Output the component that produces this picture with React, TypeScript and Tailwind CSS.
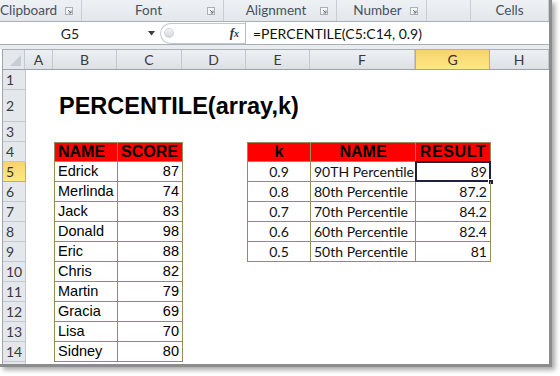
import React from 'react';

const COLS = [
  { key: 'A', w: 'w-[28px]' },
  { key: 'B', w: 'w-[64px]' },
  { key: 'C', w: 'w-[65px]' },
  { key: 'D', w: 'w-[64px]' },
  { key: 'E', w: 'w-[64px]' },
  { key: 'F', w: 'w-[105px]' },
  { key: 'G', w: 'w-[75px]' },
  { key: 'H', w: 'w-[59px]' },
];

const SCORES = [
  ['Edrick', '87'],
  ['Merlinda', '74'],
  ['Jack', '83'],
  ['Donald', '98'],
  ['Eric', '88'],
  ['Chris', '82'],
  ['Martin', '79'],
  ['Gracia', '69'],
  ['Lisa', '70'],
  ['Sidney', '80'],
];

const RESULTS = [
  ['0.9', '90TH Percentile', '89'],
  ['0.8', '80th Percentile', '87.2'],
  ['0.7', '70th Percentile', '84.2'],
  ['0.6', '60th Percentile', '82.4'],
  ['0.5', '50th Percentile', '81'],
];

const ROWS = [
  { n: 1, h: 'h-[20px]' },
  { n: 2, h: 'h-[32px]' },
  { n: 3, h: 'h-[20px]' },
  { n: 4, h: 'h-[20px]' },
  ...[5, 6, 7, 8, 9, 10, 11, 12, 13, 14].map((n) => ({ n, h: 'h-[20px]' })),
  { n: 15, h: 'h-[20px]' },
];

const arial = "font-['Liberation_Sans',Arial,sans-serif]";
const calibri = "font-['Lato','Open_Sans',sans-serif]";

function Launcher() {
  return (
    <svg width="8" height="8" viewBox="0 0 8 8" className="shrink-0">
      <rect x="0.5" y="0.5" width="7" height="7" fill="#f4f6f8" stroke="#a9b0b8" />
      <path d="M3 3 L6 6 M6 3.5 V6 H3.5" stroke="#6c7580" strokeWidth="1" fill="none" />
    </svg>
  );
}

function Ribbon() {
  const groups = [
    { label: 'Clipboard', w: 'w-[82px]', launcher: true, left: true },
    { label: 'Font', w: 'w-[142px]', launcher: true },
    { label: 'Alignment', w: 'w-[113px]', launcher: true },
    { label: 'Number', w: 'w-[90px]', launcher: true },
    { label: '', w: 'w-[44px]' },
    { label: 'Cells', w: 'flex-1' },
  ];
  return (
    <div className="h-[22px] flex bg-gradient-to-b from-[#eef1f4] to-[#e3e7ec] border-b border-[#aab0b8]">
      {groups.map((g, i) => (
        <div
          key={i}
          className={`${g.w} h-full flex items-center border-r border-[#c9ced5] ${g.left ? 'pl-0' : 'pl-2'} pr-[8px] text-[13.5px] text-[#46515f] ${calibri}`}
        >
          <span className={`flex-1 ${g.left ? 'text-left' : 'text-center'} leading-none`}>{g.label}</span>
          {g.launcher && <Launcher />}
        </div>
      ))}
    </div>
  );
}

function FormulaBar() {
  return (
    <div className="h-[23px] flex items-center bg-white border-b border-[#aab0b8]">
      <div className="w-[160px] h-full flex items-center">
        <span className={`w-[140px] text-center text-[14px] text-[#1e1e1e] ${calibri}`}>G5</span>
        <svg width="8" height="5" viewBox="0 0 8 5" className="ml-[8px]">
          <path d="M0 0 H7 L3.5 4.5 Z" fill="#3b3b3b" />
        </svg>
      </div>
      <div className="w-[85px] h-[21px] flex items-center rounded-l-[11px] border border-r-0 border-[#c3c8cf] bg-white">
        <span className="ml-[3px] w-[10px] h-[10px] rounded-full bg-gradient-to-b from-[#f4f5f6] to-[#d2d6db] border border-[#d0d4d9]" />
        <span className="ml-auto mr-[6px] font-['Liberation_Serif',serif] italic font-bold text-[13px] text-[#333]">
          f<span className="text-[10px]">x</span>
        </span>
      </div>
      <div className="h-full border-l border-[#b7bcc3]" />
      <span className={`ml-[7px] text-[14px] text-[#111] ${calibri}`}>=PERCENTILE(C5:C14, 0.9)</span>
    </div>
  );
}

function ColumnHeaders() {
  return (
    <div className="h-[21px] flex border-t border-[#aab0b8] border-b border-b-[#9da3ab]">
      <div className="w-[23px] h-full bg-[#e4e8ed] border-r border-[#c3c8cf] flex items-end justify-end p-[3px]">
        <svg width="11" height="11" viewBox="0 0 11 11">
          <path d="M11 0 V11 H0 Z" fill="#c6ccd4" />
        </svg>
      </div>
      {COLS.map((c) => (
        <div
          key={c.key}
          className={`${c.w} shrink-0 h-full flex items-center justify-center text-[14px] ${calibri} ${
            c.key === 'G'
              ? 'bg-gradient-to-b from-[#f8d26f] to-[#fde983] border-r border-[#e0a83a] border-l border-l-[#e0a83a] text-[#333]'
              : 'bg-gradient-to-b from-[#edf0f3] to-[#dde1e6] border-r border-[#c3c8cf] text-[#3a3a3a]'
          }`}
        >
          {c.key}
        </div>
      ))}
    </div>
  );
}

const tb = 'border-[#978c5c]';

function Cell({ col, row }: { col: string; row: number }) {
  // Table 1: B/C rows 4-14
  if ((col === 'B' || col === 'C') && row >= 4 && row <= 14) {
    const edge = `border-r border-b ${tb} ${col === 'B' ? 'border-l' : ''} ${row === 4 ? 'border-t' : ''}`;
    if (row === 4) {
      return (
        <div className={`h-full bg-[#ff0000] ${edge} flex items-center px-[3px] text-[16px] font-bold text-black ${arial}`}>
          {col === 'B' ? 'NAME' : 'SCORE'}
        </div>
      );
    }
    const [name, score] = SCORES[row - 5];
    return (
      <div
        className={`h-full ${edge} flex items-center px-[3px] text-[14.5px] text-black ${arial} ${
          col === 'C' ? 'justify-end' : ''
        }`}
      >
        {col === 'B' ? name : score}
      </div>
    );
  }
  // Table 2: E/F/G rows 4-9
  if ((col === 'E' || col === 'F' || col === 'G') && row >= 4 && row <= 9) {
    const edge = `border-r border-b ${tb} ${col === 'E' ? 'border-l' : ''} ${row === 4 ? 'border-t' : ''}`;
    if (row === 4) {
      const label = col === 'E' ? 'k' : col === 'F' ? 'NAME' : 'RESULT';
      return (
        <div
          className={`h-full bg-[#ff0000] ${edge} flex items-center justify-center text-[16px] font-bold text-black ${arial} ${
            col === 'G' ? 'tracking-[0.6px]' : ''
          }`}
        >
          {label}
        </div>
      );
    }
    const [k, name, res] = RESULTS[row - 5];
    const text = col === 'E' ? k : col === 'F' ? name : res;
    const align = col === 'E' ? 'justify-center' : col === 'G' ? 'justify-end' : '';
    return (
      <div
        className={`relative h-full ${edge} flex items-center px-[3px] whitespace-nowrap text-[14px] text-[#111] ${calibri} ${align}`}
      >
        {text}
        {col === 'G' && row === 5 && (
          <>
            <div className="absolute -left-px -top-px -right-px -bottom-px border-2 border-[#1f2040]" />
            <div className="absolute -right-[4px] -bottom-[4px] w-[6px] h-[6px] bg-[#1f2040] border border-white" />
          </>
        )}
      </div>
    );
  }
  if (col === 'B' && row === 2) {
    return (
      <div className={`h-full flex items-center pl-[5px] pt-[2px] whitespace-nowrap text-[23.5px] font-bold text-black ${arial}`}>
        PERCENTILE(array,k)
      </div>
    );
  }
  return <div className="h-full" />;
}

function Grid() {
  return (
    <div className="flex-1 overflow-hidden">
      {ROWS.map((r) => (
        <div key={r.n} className={`${r.h} flex`}>
          <div
            className={`w-[23px] shrink-0 h-full flex items-center pl-[3px] text-[14px] ${calibri} border-b border-r ${
              r.n === 5
                ? 'bg-gradient-to-b from-[#f8d26f] to-[#fde983] border-[#e0a83a] text-[#333]'
                : 'bg-[#e4e8ed] border-[#c3c8cf] text-[#3a3a3a]'
            }`}
          >
            {r.n <= 14 ? r.n : ''}
          </div>
          {COLS.map((c) => (
            <div key={c.key} className={`${c.w} shrink-0 h-full overflow-visible`}>
              <Cell col={c.key} row={r.n} />
            </div>
          ))}
        </div>
      ))}
    </div>
  );
}

export default function App() {
  return (
    <div className="w-[560px] h-[376px] bg-white overflow-hidden">
      <div className="w-[552px] h-[367px] flex flex-col bg-white border-r-[3px] border-b-[3px] border-[#8c8c8c] shadow-[3px_3px_5px_rgba(0,0,0,0.35)] overflow-hidden">
        <Ribbon />
        <FormulaBar />
        <div className="h-[4px] bg-[#e9ecef]" />
        <div className="flex-1 flex flex-col ml-[2px] border-l border-[#9ea4ab] overflow-hidden">
          <ColumnHeaders />
          <Grid />
        </div>
      </div>
    </div>
  );
}
